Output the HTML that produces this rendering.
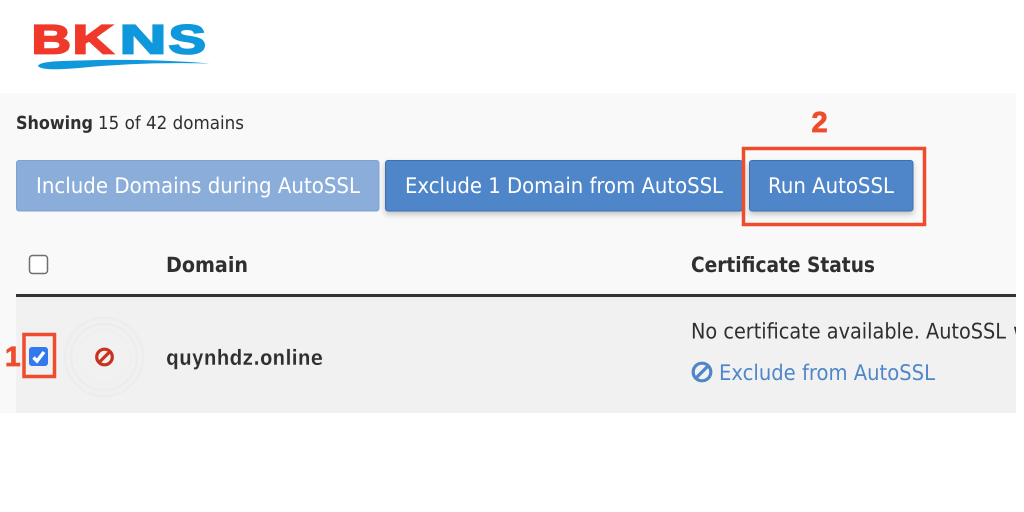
<!DOCTYPE html>
<html><head><meta charset="utf-8"><style>
html,body{margin:0;padding:0;background:#fff;width:1024px;height:512px;overflow:hidden}
svg{display:block}
text{font-family:"DejaVu Sans",sans-serif;text-rendering:geometricPrecision}
.b{font-weight:bold}
.d{fill:#2f2f2f}
.w{fill:#fff;font-size:21.500px}
.l{font-family:"Liberation Sans",sans-serif;font-weight:bold;font-size:41px}
.a{font-family:"Liberation Sans",sans-serif;font-weight:bold;fill:#ee4c2c;stroke:#ee4c2c;stroke-width:.8px}
</style></head><body>
<svg width="1024" height="512" viewBox="0 0 1024 512" xmlns="http://www.w3.org/2000/svg">
<defs>
<filter id="s" x="-10%" y="-20%" width="120%" height="150%"><feDropShadow dx="0" dy="3" stdDeviation="3" flood-color="#000" flood-opacity=".22"/></filter>
<filter id="bl" x="-5%" y="-5%" width="110%" height="110%"><feGaussianBlur stdDeviation=".8"/></filter>
<clipPath id="c"><rect x="0" y="300" width="1016" height="113"/></clipPath>
</defs>
<rect x="0" y="93" width="1016" height="320" fill="#f9f9f9"/>
<rect x="16" y="297" width="1000" height="116" fill="#f1f1f1"/>
<rect x="16" y="294" width="1000" height="3" fill="#333"/>

<!-- logo -->
<g fill="#f0392b" stroke="#f0392b" stroke-width="1.800">
<text class="l" x="31.500" y="53.500" textLength="39.500" lengthAdjust="spacingAndGlyphs">B</text>
<text class="l" x="72.500" y="53.500" textLength="41" lengthAdjust="spacingAndGlyphs">K</text>
</g>
<g fill="#0f98dc" stroke="#0f98dc" stroke-width="1.800">
<text class="l" x="119.500" y="53.500" textLength="47" lengthAdjust="spacingAndGlyphs">N</text>
<text class="l" x="168.500" y="53.500" textLength="37.500" lengthAdjust="spacingAndGlyphs">S</text>
</g>
<path d="M38 66C40 62 52 61 80 60.500C120 59 170 60 210 63.500C170 62.500 130 63.500 95 66.500C70 69 42 71.500 38 66Z" fill="#0f98dc"/>

<!-- showing -->
<text class="b d" x="16" y="129" font-size="18" textLength="77" lengthAdjust="spacingAndGlyphs">Showing</text>
<text class="d" x="98" y="129" font-size="18" textLength="146" lengthAdjust="spacingAndGlyphs">15 of 42 domains</text>

<!-- buttons -->
<rect x="16.500" y="160.500" width="362.500" height="50.500" rx="2.500" fill="#8badda" stroke="#7ba2d3"/>
<text class="w" x="36" y="193" textLength="324" lengthAdjust="spacingAndGlyphs">Include Domains during AutoSSL</text>
<rect x="385.500" y="160.500" width="357" height="50.500" rx="2.500" fill="#4f86c9" stroke="#3a70b5" filter="url(#s)"/>
<text class="w" x="405" y="193" textLength="318" lengthAdjust="spacingAndGlyphs">Exclude 1 Domain from AutoSSL</text>
<rect x="749.500" y="160.500" width="163.500" height="50.500" rx="2.500" fill="#4f86c9" stroke="#3a70b5" filter="url(#s)"/>
<text class="w" x="768" y="193" textLength="126" lengthAdjust="spacingAndGlyphs">Run AutoSSL</text>
<rect x="743.500" y="148.500" width="181" height="76" fill="none" stroke="#ee4c2c" stroke-width="3.500"/>
<text class="a" x="811.500" y="132" font-size="29">2</text>

<!-- header -->
<rect x="29.500" y="255.500" width="18" height="18" rx="3" fill="#fff" stroke="#6f6f6f" stroke-width="1.500"/>
<text class="b d" x="166" y="272" font-size="21" textLength="82" lengthAdjust="spacingAndGlyphs">Domain</text>
<text class="b d" x="691" y="272" font-size="21" textLength="184" lengthAdjust="spacingAndGlyphs">Certificate Status</text>

<!-- row -->
<g filter="url(#bl)" fill="none">
<circle cx="104" cy="357" r="39" stroke="#ebebeb" stroke-width="2"/>
<circle cx="104" cy="357" r="33" stroke="#ebebeb" stroke-width="2"/>
<circle cx="104" cy="357" r="27" stroke="#eeeeee" stroke-width="1.500"/>
</g>
<rect x="24" y="334.500" width="30.500" height="42" fill="none" stroke="#ee4c2c" stroke-width="3.500"/>
<text class="a" x="5" y="366" font-size="28">1</text>
<rect x="29" y="347" width="19" height="19" rx="3" fill="#3478f0"/>
<path d="M33.500 357.500L37 361L44 352" fill="none" stroke="#fff" stroke-width="3.400"/>
<circle cx="104.500" cy="357" r="7.800" fill="none" stroke="#c9321f" stroke-width="3.200"/>
<path d="M99 362.500L110 351.500" stroke="#c9321f" stroke-width="3.200"/>
<text class="d" x="166" y="365" font-size="21.500" font-weight="bold" textLength="157" lengthAdjust="spacingAndGlyphs" stroke="#f1f1f1" stroke-width=".5">quynhdz.online</text>
<g clip-path="url(#c)">
<text class="d" x="691" y="338.500" font-size="21.500" textLength="315" lengthAdjust="spacingAndGlyphs">No certificate available. AutoSSL</text>
<text class="d" x="1013" y="338.500" font-size="21.500">w</text>
</g>
<circle cx="702" cy="372" r="8.800" fill="none" stroke="#4f86c9" stroke-width="3.200"/>
<path d="M696 378L708 366" stroke="#4f86c9" stroke-width="3.200"/>
<text x="719" y="380" font-size="21.500" fill="#4f86c9" textLength="216" lengthAdjust="spacingAndGlyphs">Exclude from AutoSSL</text>
</svg>
</body></html>
